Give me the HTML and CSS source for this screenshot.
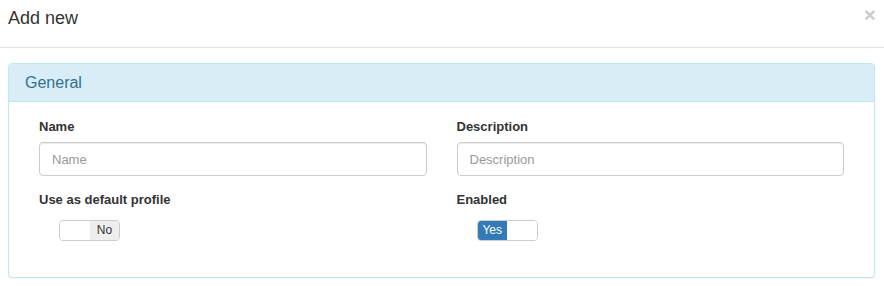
FILE: index.html
```html
<!DOCTYPE html>
<html>
<head>
<meta charset="utf-8">
<link rel="stylesheet" href="styles.css">
</head>
<body>
<div class="modal">
  <div class="modal-header">
    <h4 class="modal-title">Add new</h4>
    <button class="close" type="button">×</button>
  </div>
  <div class="modal-body">
    <div class="panel">
      <div class="panel-heading">General</div>
      <div class="panel-body">
        <div class="row">
          <div class="col">
            <div class="form-group">
              <label class="control-label">Name</label>
              <input class="form-control" type="text" placeholder="Name">
            </div>
          </div>
          <div class="col">
            <div class="form-group">
              <label class="control-label">Description</label>
              <input class="form-control" type="text" placeholder="Description">
            </div>
          </div>
        </div>
        <div class="row">
          <div class="col">
            <div class="form-group last">
              <label class="control-label">Use as default profile</label>
              <div class="switch-wrap">
                <div class="switch">
                  <span class="switch-blank"></span>
                  <span class="switch-off">No</span>
                </div>
              </div>
            </div>
          </div>
          <div class="col">
            <div class="form-group last">
              <label class="control-label">Enabled</label>
              <div class="switch-wrap">
                <div class="switch">
                  <span class="switch-on">Yes</span>
                  <span class="switch-blank"></span>
                </div>
              </div>
            </div>
          </div>
        </div>
      </div>
    </div>
  </div>
</div>
</body>
</html>
```

FILE: styles.css
```css
* { box-sizing: border-box; }
html, body {
  margin: 0;
  padding: 0;
  background: #fff;
  font-family: "Liberation Sans", Arial, sans-serif;
  font-size: 14px;
  line-height: 20px;
  color: #333;
}
.modal-header {
  display: flex;
  justify-content: space-between;
  align-items: flex-start;
  padding: 6px 8px 16px 8px;
  border-bottom: 1px solid #e5e5e5;
}
.modal-title {
  margin: 0;
  font-size: 18px;
  font-weight: normal;
  line-height: 25px;
  color: #333;
}
.close {
  margin: -2px 0 0 0;
  padding: 0;
  border: 0;
  background: transparent;
  font-family: "Liberation Sans", Arial, sans-serif;
  font-size: 21px;
  font-weight: bold;
  line-height: 1;
  color: #000;
  opacity: .2;
  cursor: pointer;
}
.modal-body {
  padding: 15px 9px 8px 8px;
}
.panel {
  border: 1px solid #bce8f1;
  border-radius: 4px;
  background: #fff;
  box-shadow: 0 1px 1px rgba(0,0,0,.05);
}
.panel-heading {
  padding: 10px 15px 9px 16px;
  background: #d9edf7;
  color: #31708f;
  border-bottom: 1px solid #bce8f1;
  border-radius: 3px 3px 0 0;
  font-size: 16px;
  line-height: 18px;
}
.panel-body {
  padding: 15px 15px 15px 15px;
}
.row {
  display: grid;
  grid-template-columns: 1fr 1fr;
}
.col {
  padding: 0 15px;
}
.form-group {
  margin-bottom: 14px;
}
.form-group.last {
  margin-bottom: 0;
}
.control-label {
  display: block;
  font-size: 13px;
  font-weight: bold;
  line-height: 20px;
  margin-bottom: 5px;
  color: #333;
}
.form-control {
  display: block;
  width: 100%;
  height: 34px;
  padding: 6px 12px;
  font-family: "Liberation Sans", Arial, sans-serif;
  font-size: 13px;
  line-height: 20px;
  color: #555;
  background: #fff;
  border: 1px solid #ccc;
  border-radius: 4px;
  box-shadow: inset 0 1px 1px rgba(0,0,0,.075);
}
.form-control::placeholder {
  color: #999;
}
.switch-wrap {
  display: flex;
  padding: 5px 0 21px 20px;
}
.switch {
  display: flex;
  width: 61px;
  height: 21px;
  border: 1px solid #ccc;
  border-radius: 4px;
  overflow: hidden;
  font-size: 12px;
  line-height: 19px;
  background: #fff;
}
.switch span {
  display: block;
  height: 19px;
  text-align: center;
}
.switch-blank {
  width: 30px;
  background: #fff;
}
.switch-off {
  width: 29px;
  background: #eee;
  color: #333;
}
.switch-on {
  width: 30px;
  background: #337ab7;
  color: #fff;
}
```
